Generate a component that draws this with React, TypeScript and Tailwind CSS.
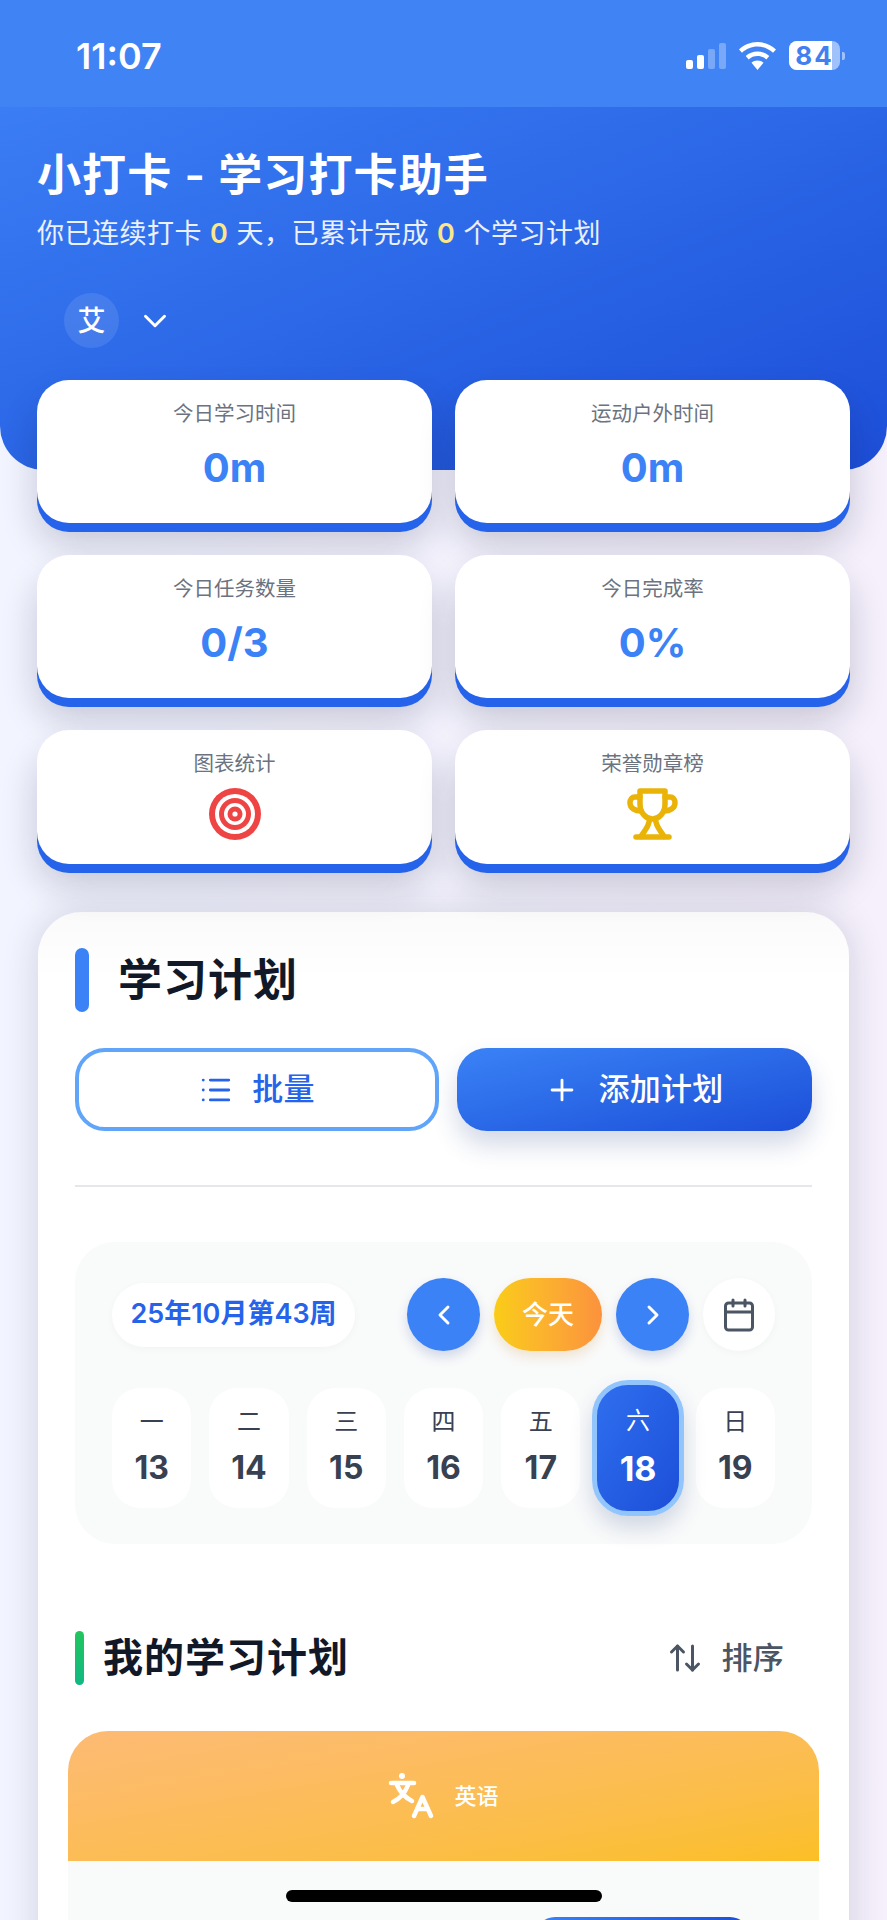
import { ArrowUpDown, Calendar, ChevronDown, ChevronLeft, ChevronRight, List, Plus } from "lucide-react";

const font = { fontFamily: 'Inter, "Noto Sans CJK SC", sans-serif' };

function StatCard({ label, value, icon }: { label: string; value?: string; icon?: React.ReactNode }) {
  return (
    <div
      className={`flex flex-col items-center rounded-[32px] bg-white pt-[19px] shadow-[0_9px_0_#2563eb,0_22px_36px_rgba(20,20,60,0.2)] ${
        value ? "h-[143px]" : "h-[134px]"
      }`}
    >
      <div className="text-[20.5px] leading-[30px] text-[#6b7280]">{label}</div>
      {value ? (
        <div className="mt-[15px] text-[40px] leading-[48px] font-bold text-[#3b82f6]">{value}</div>
      ) : (
        <div className="mt-[9px]">{icon}</div>
      )}
    </div>
  );
}

function Target() {
  return (
    <svg width="52" height="52" viewBox="0 0 52 52">
      <circle cx="26" cy="26" r="26" fill="#ef4444" />
      <circle cx="26" cy="26" r="20" fill="#fff" />
      <circle cx="26" cy="26" r="16" fill="#ef4444" />
      <circle cx="26" cy="26" r="11" fill="#fff" />
      <circle cx="26" cy="26" r="7.5" fill="#ef4444" />
      <circle cx="26" cy="26" r="2.6" fill="#fff" />
    </svg>
  );
}

function Trophy() {
  return (
    <svg width="51" height="52" viewBox="0 0 51 52" fill="none" stroke="#eab308" strokeWidth="5.500" strokeLinecap="round" strokeLinejoin="round">
      <path d="M13 3H38V16C38 25 32 31 25.500 31C19 31 13 25 13 16Z" />
      <path d="M13 9H8C5 9 3 11 3 15C3 20 8 23 14 23" />
      <path d="M38 9H43C46 9 48 11 48 15C48 20 43 23 37 23" />
      <path d="M22.500 31C22.500 38 18 42 14 48.500" />
      <path d="M28.500 31C28.500 38 33 42 37 48.500" />
      <path d="M9 49H42" />
    </svg>
  );
}

function TranslateIcon() {
  return (
    <svg width="46" height="46" viewBox="0 0 46 46" fill="none" stroke="#fff" strokeWidth="4.500" strokeLinecap="round" strokeLinejoin="round">
      <circle cx="14" cy="3" r="3" fill="#fff" stroke="none" />
      <path d="M3 10H26" />
      <path d="M9 12C12 19 18 25 24 28" />
      <path d="M20 12C17 20 11 26 5 29" />
      <path d="M26 43L34.500 24L43 43" />
      <path d="M29.500 36H39.500" />
    </svg>
  );
}

const days = [
  ["一", "13"],
  ["二", "14"],
  ["三", "15"],
  ["四", "16"],
  ["五", "17"],
  ["六", "18"],
  ["日", "19"],
];

export default function App() {
  return (
    <div style={font} className="relative h-[1920px] w-[887px] overflow-hidden bg-gradient-to-r from-[#f2f5ff] to-[#f5f0fb]">
      <div className="flex h-[107px] items-start justify-between bg-[#4083f5] pt-[36px] pr-[42px] pl-[76px] text-white">
        <div className="text-[36px] leading-[41px] font-semibold">11:07</div>
        <div className="flex items-center gap-[13px] pt-[5px]">
          <div className="flex h-[27px] items-end gap-[4px]">
            <div className="h-[9px] w-[7px] rounded-[2px] bg-white" />
            <div className="h-[14px] w-[7px] rounded-[2px] bg-white" />
            <div className="h-[20px] w-[7px] rounded-[2px] bg-white/30" />
            <div className="h-[26px] w-[7px] rounded-[2px] bg-white/30" />
          </div>
          <svg width="37" height="28" viewBox="0 0 37 28" fill="#fff">
            <path d="M18.5 0C11.3 0 5 2.8 0 7.4l3 3.4C7.2 7 12.5 4.6 18.5 4.6S29.800 7 34 10.800l3-3.400C32 2.800 25.700 0 18.500 0z" />
            <path d="M18.500 9.500c-4.500 0-8.600 1.700-11.800 4.500l3 3.400c2.400-2.100 5.400-3.300 8.800-3.300s6.400 1.200 8.800 3.300l3-3.400c-3.200-2.800-7.300-4.500-11.800-4.500z" />
            <path d="M18.500 18.500c-2.300 0-4.400.8-6 2.200l6 7.300 6-7.300c-1.600-1.400-3.700-2.200-6-2.200z" />
          </svg>
          <div className="flex items-center gap-[2px]">
            <div className="relative flex h-[29px] w-[51px] overflow-hidden rounded-[8px] bg-white/50">
              <div className="w-[43px] bg-white" />
              <div className="absolute inset-0 flex items-center justify-center text-[26px] leading-none font-bold tracking-[2px] text-[#4280ef]">84</div>
            </div>
            <div className="h-[8px] w-[3px] rounded-r-[2px] bg-white/50" />
          </div>
        </div>
      </div>

      <div className="h-[363px] rounded-b-[44px] bg-gradient-to-br from-[#3b7df4] to-[#1d4ed8] px-[37px] pt-[40px] text-white">
        <div className="text-[44px] leading-[56px] font-semibold tracking-[1.1px]">小打卡 - 学习打卡助手</div>
        <div className="mt-[12px] text-[27px] leading-[38px] tracking-[0.5px] text-white/90">
          你已连续打卡 <span className="font-semibold text-[#fde68a]">0</span> 天，已累计完成{" "}
          <span className="font-semibold text-[#fde68a]">0</span> 个学习计划
        </div>
        <div className="mt-[40px] ml-[27px] flex items-center gap-[17px]">
          <div className="flex h-[55px] w-[55px] items-center justify-center rounded-full bg-white/10 text-[28px] font-medium">艾</div>
          <ChevronDown size={38} strokeWidth={1.900} />
        </div>
      </div>

      <div className="relative mt-[-90px] grid grid-cols-2 gap-x-[23px] gap-y-[32px] px-[37px]">
        <StatCard label="今日学习时间" value="0m" />
        <StatCard label="运动户外时间" value="0m" />
        <StatCard label="今日任务数量" value="0/3" />
        <StatCard label="今日完成率" value="0%" />
        <StatCard label="图表统计" icon={<Target />} />
        <StatCard label="荣誉勋章榜" icon={<Trophy />} />
      </div>

      <div className="mx-[38px] mt-[48px] h-[1100px] rounded-[44px] bg-gradient-to-b from-[#fafafa] to-white to-[6%] px-[37px] pt-[36px] shadow-[0_0_36px_rgba(30,30,70,0.16)]">
        <div className="flex h-[64px] items-center gap-[29px]">
          <div className="h-[64px] w-[14px] rounded-full bg-[#3b82f6]" />
          <div className="text-[44px] leading-[56px] font-semibold tracking-[1px] text-[#111827]">学习计划</div>
        </div>

        <div className="mt-[36px] flex gap-[18px]">
          <button className="flex h-[83px] w-[364px] items-center justify-center gap-[19px] rounded-[30px] border-[4px] border-[#60a5fa] bg-white text-[31px] font-medium tracking-[0.3px] text-[#2563eb]">
            <List size={34} strokeWidth={2} />
            批量
          </button>
          <button className="flex h-[83px] w-[355px] items-center justify-center gap-[19px] rounded-[30px] bg-gradient-to-br from-[#3b82f6] to-[#1d4ed8] text-[31px] font-medium tracking-[0.3px] text-white shadow-[0_14px_26px_rgba(30,60,130,0.2)]">
            <Plus size={34} strokeWidth={2} />
            添加计划
          </button>
        </div>

        <div className="mt-[54px] h-[2px] bg-[#e5e7eb]" />

        <div className="mt-[55px] h-[302px] rounded-[40px] bg-[#f9fafa] px-[37px] pt-[36px]">
          <div className="flex items-center">
            <div className="flex h-[64px] w-[243px] items-center justify-center rounded-full bg-white text-[27px] font-semibold text-[#2563eb] shadow-[0_2px_8px_rgba(0,0,0,0.03)]">
              25年10月第43周
            </div>
            <div className="ml-[52px] flex h-[73px] w-[73px] items-center justify-center rounded-full bg-[#3b82f6] text-white shadow-[0_6px_12px_rgba(30,60,150,0.18)]">
              <ChevronLeft size={32} strokeWidth={2.200} />
            </div>
            <div className="ml-[14px] flex h-[73px] w-[108px] items-center justify-center rounded-full bg-gradient-to-r from-[#facc15] to-[#fb923c] text-[26px] font-medium text-white shadow-[0_6px_12px_rgba(200,130,30,0.18)]">
              今天
            </div>
            <div className="ml-[14px] flex h-[73px] w-[73px] items-center justify-center rounded-full bg-[#3b82f6] text-white shadow-[0_6px_12px_rgba(30,60,150,0.18)]">
              <ChevronRight size={32} strokeWidth={2.200} />
            </div>
            <div className="ml-[14px] flex h-[73px] w-[72px] items-center justify-center rounded-full bg-white text-[#4b5563] shadow-[0_2px_8px_rgba(0,0,0,0.03)]">
              <Calendar size={36} strokeWidth={2} />
            </div>
          </div>

          <div className="mt-[37px] grid h-[120px] grid-cols-7 gap-x-[18px]">
            {days.map(([w, d]) =>
              d === "18" ? (
                <div
                  key={d}
                  className="relative mx-[-6px] my-[-8px] flex flex-col items-center rounded-[36px] border-[5px] border-[#93c5fd] bg-gradient-to-br from-[#2f6fef] to-[#1d4ed8] pt-[21px] text-white shadow-[0_12px_22px_rgba(30,60,130,0.18)]"
                >
                  <div className="text-[24px] leading-[30px]">{w}</div>
                  <div className="mt-[13px] text-[34px] leading-[40px] font-bold">{d}</div>
                </div>
              ) : (
                <div key={d} className="flex flex-col items-center rounded-[28px] bg-white pt-[19px] text-[#374151]">
                  <div className="text-[24px] leading-[30px]">{w}</div>
                  <div className="mt-[11px] text-[32px] leading-[40px] font-bold">{d}</div>
                </div>
              ),
            )}
          </div>
        </div>

        <div className="mt-[87px] flex h-[54px] items-center">
          <div className="h-[54px] w-[9px] rounded-full bg-gradient-to-b from-[#22c55e] to-[#10b981]" />
          <div className="ml-[19px] text-[40px] leading-[54px] font-semibold tracking-[1px] text-[#111827]">我的学习计划</div>
          <div className="ml-auto flex items-center gap-[18px] pr-[28px] text-[31px] font-medium tracking-[0.3px] text-[#4b5563]">
            <ArrowUpDown size={36} strokeWidth={2} />
            排序
          </div>
        </div>

        <div className="mx-[-7px] mt-[46px] h-[400px] overflow-hidden rounded-[40px] bg-[#f9fafa]">
          <div className="flex h-[130px] items-center justify-center gap-[20px] bg-gradient-to-br from-[#fdba74] to-[#fbbf24] text-white">
            <TranslateIcon />
            <span className="text-[22px] font-medium">英语</span>
          </div>
          <div className="mt-[56px] ml-[467px] h-[40px] w-[215px] rounded-t-[20px] bg-gradient-to-r from-[#3b82f6] to-[#1d4ed8]" />
        </div>
      </div>

      <div className="absolute top-[1890px] left-[286px] h-[12px] w-[316px] rounded-full bg-black" />
    </div>
  );
}
